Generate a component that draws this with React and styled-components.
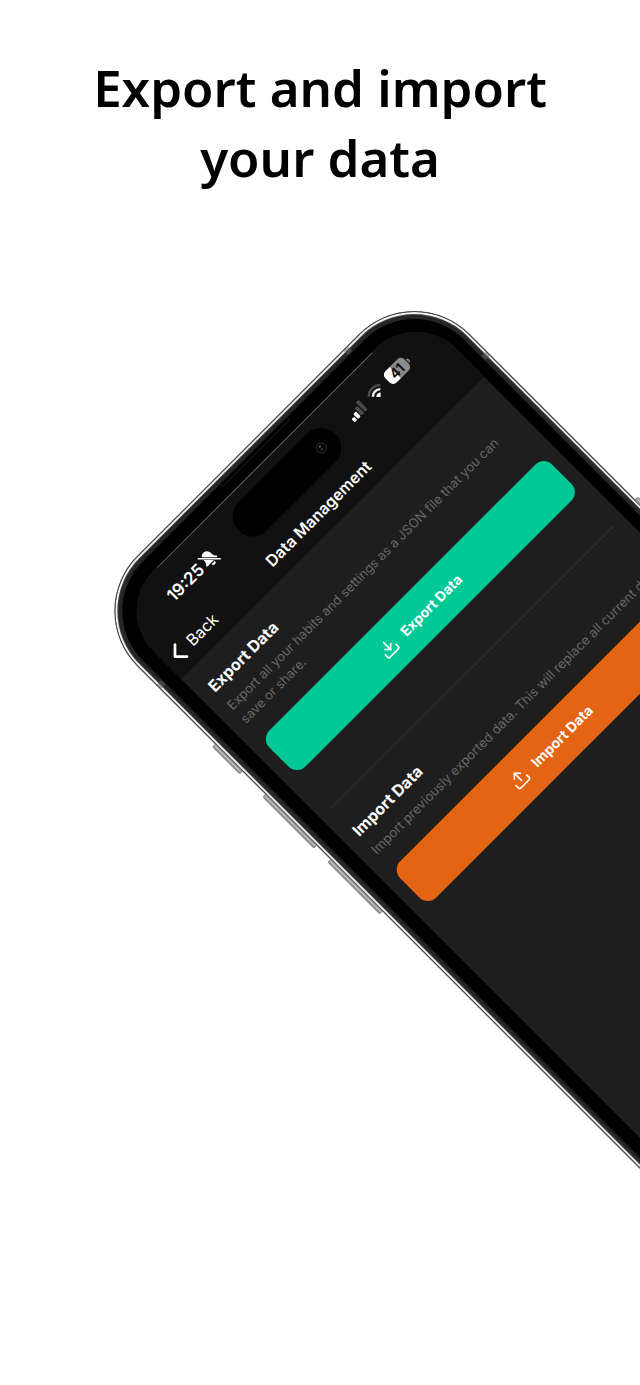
import React from 'react'
import styled, { createGlobalStyle } from 'styled-components'
import { Download, Upload } from 'lucide-react'

const colors = {
  screen: '#1e1e1e',
  header: '#111111',
  line: '#333333',
  muted: '#686868',
  green: '#00c896',
  orange: '#e36414',
  white: '#ffffff'
}

const GlobalStyle = createGlobalStyle`
  *, *::before, *::after {
    box-sizing: border-box;
  }

  body {
    background: ${colors.white};
    margin: 0;
  }
`

const Page = styled.main`
  display: flex;
  flex-direction: column;
  font-family: Inter, 'Liberation Sans', sans-serif;
  height: 100vh;
  overflow: hidden;
`

const Headline = styled.h1`
  color: #000000;
  font-family: 'Noto Sans', sans-serif;
  font-size: 51px;
  font-weight: 600;
  line-height: 70px;
  margin: 0 auto;
  max-width: 520px;
  padding-top: 52px;
  text-align: center;
`

const Stage = styled.div`
  flex: 1;
  padding-left: calc(50% - 238px);
  padding-top: 419px;
`

const Phone = styled.div`
  background: #000000;
  border: 1px solid #4a4a4a;
  border-radius: 78px;
  box-shadow: inset 0 0 0 2px #f4f4f4, inset 0 0 0 3px #444444, inset 0 0 0 7px #262626;
  height: 960px;
  padding: 21px 19px 21px 21px;
  position: relative;
  transform: rotate(-45deg);
  transform-origin: 0 0;
  width: 470px;
`

const SideKey = styled.span`
  background: linear-gradient(90deg, #777777, #c8c8c8 50%, #888888);
  border: 1px solid #777777;
  border-radius: 2px;
  height: ${props => props.$length}px;
  position: absolute;
  top: ${props => props.$top}px;
  width: 5px;
  ${props => props.$right ? 'right: -5px;' : 'left: -5px;'}
`

const Antenna = styled.span`
  background: #666666;
  height: 6px;
  opacity: 0.5;
  position: absolute;
  width: 6px;
  ${props => props.$place}
`

const Speaker = styled.span`
  border: 1px solid #1c1c1c;
  border-radius: 3px;
  height: 5px;
  left: 50%;
  position: absolute;
  top: 6px;
  transform: translateX(-50%);
  width: 96px;
`

const Screen = styled.div`
  background: ${colors.screen};
  border-radius: 57px;
  display: flex;
  flex-direction: column;
  height: 100%;
  overflow: hidden;
`

const Header = styled.header`
  background: ${colors.header};
  border-bottom: 1px solid #262626;
  position: relative;
`

const TopGlare = styled.span`
  background: #6a6a6a;
  height: 1px;
  left: 62px;
  position: absolute;
  right: 62px;
  top: 0;
`

const StatusBar = styled.div`
  align-items: center;
  color: ${colors.white};
  display: flex;
  height: 62px;
  justify-content: space-between;
  padding: 0 41px 0 49px;
`

const StatusGroup = styled.div`
  align-items: center;
  display: flex;
  gap: ${props => props.$gap}px;
`

const Time = styled.time`
  font-size: 17px;
  font-weight: 600;
  line-height: 22px;
`

const Island = styled.div`
  align-items: center;
  background: #000000;
  border-radius: 20px;
  display: flex;
  height: 40px;
  justify-content: flex-end;
  left: 50%;
  padding-right: 14px;
  position: absolute;
  top: 12px;
  transform: translateX(-50%);
  width: 137px;
`

const NavBar = styled.nav`
  align-items: center;
  display: grid;
  grid-template-columns: 1fr auto 1fr;
  height: 35px;
  padding: 0 9px 8px;
`

const BackButton = styled.button`
  align-items: center;
  background: none;
  border: 0;
  color: ${colors.white};
  display: flex;
  font: inherit;
  font-size: 16px;
  gap: 9px;
  justify-self: start;
  line-height: 22px;
  padding: 0;
`

const NavTitle = styled.h2`
  color: ${colors.white};
  font-size: 16px;
  font-weight: 600;
  line-height: 22px;
  margin: 0;
`

const Section = styled.section`
  margin: 0 14px;
  padding: ${props => props.$first ? 16 : 24}px 0 47px;

  & + & {
    border-top: 1px solid ${colors.line};
  }
`

const SectionTitle = styled.h3`
  color: ${colors.white};
  font-size: 16px;
  font-weight: 700;
  line-height: 20px;
  margin: 0 0 7px;
`

const Description = styled.p`
  color: ${colors.muted};
  font-size: 13px;
  line-height: 19px;
  margin: 0 -12px 16px 0;
`

const ActionButton = styled.button`
  align-items: center;
  background: ${props => props.$color};
  border: 0;
  border-radius: 12px;
  color: ${colors.white};
  display: flex;
  font: inherit;
  font-size: 14px;
  font-weight: 700;
  gap: 10px;
  height: 51px;
  justify-content: center;
  line-height: 20px;
  padding: 0;
  width: 100%;
`

const BellOffIcon = () => (
  <svg width='20' height='20' viewBox='0 0 18 18' aria-hidden='true'>
    <path d='M9 1.500c-3 0-4.600 2.200-4.600 5 0 3-.8 4-1.900 5.100-.5.600-.2 1.300.6 1.300h11.800c.8 0 1.100-.7.6-1.300-1.100-1.100-1.900-2.100-1.900-5.100 0-2.800-1.600-5-4.600-5z' fill='#fff' />
    <path d='M6.800 14h4.400c-.2 1.400-1 2.200-2.200 2.200S7 15.400 6.800 14z' fill='#fff' />
    <path d='M2 2l14 14' stroke={colors.header} strokeWidth='2.600' />
    <path d='M2 2l14 14' stroke='#fff' strokeWidth='1.300' strokeLinecap='round' />
  </svg>
)

const SignalIcon = () => (
  <svg width='20' height='14' viewBox='0 0 20 14' aria-hidden='true'>
    <rect x='0' y='9' width='3.800' height='4.500' rx='1.200' fill='#fff' />
    <rect x='5' y='6.500' width='3.800' height='7' rx='1.200' fill='#fff' />
    <rect x='10' y='3.500' width='3.800' height='10' rx='1.200' fill='#4a4a4a' />
    <rect x='15' y='0' width='3.800' height='13.500' rx='1.200' fill='#4a4a4a' />
  </svg>
)

const WifiIcon = () => (
  <svg width='19' height='14' viewBox='0 0 19 14' fill='none' aria-hidden='true'>
    <path d='M1.300 5.200a11.600 11.600 0 0 1 16.400 0' stroke='#4a4a4a' strokeWidth='2.500' />
    <path d='M4.200 8.100a7.500 7.500 0 0 1 10.600 0' stroke='#fff' strokeWidth='2.300' />
    <path d='M9.500 13.800L6.400 10.700a4.400 4.400 0 0 1 6.200 0z' fill='#fff' />
  </svg>
)

const BatteryBody = styled.span`
  background: linear-gradient(90deg, ${colors.white} 41%, #8a8a8a 41%);
  border-radius: 5px;
  color: ${colors.header};
  display: block;
  font-size: 14px;
  font-weight: 700;
  height: 16px;
  line-height: 16px;
  text-align: center;
  width: 27px;
`

const BatteryTip = styled.span`
  background: #8a8a8a;
  border-radius: 0 2px 2px 0;
  height: 5px;
  width: 2px;
`

const BackIcon = () => (
  <svg width='13' height='20' viewBox='0 0 13 20' fill='none' aria-hidden='true'>
    <path d='M11 1.500L2.500 10l8.500 8.500' stroke='#fff' strokeWidth='2.700' strokeLinecap='round' strokeLinejoin='round' />
  </svg>
)

const CameraIcon = () => (
  <svg width='12' height='12' viewBox='0 0 12 12' aria-hidden='true'>
    <circle cx='6' cy='6' r='5' fill='#050505' stroke='#2a2a2a' />
    <circle cx='6' cy='4' r='1' fill='#777777' />
    <circle cx='5.500' cy='7.500' r='1' fill='#2f4a48' />
  </svg>
)

const App = () => (
  <Page>
    <GlobalStyle />
    <Headline>Export and import your&nbsp;data</Headline>
    <Stage>
      <Phone>
        <SideKey $top={187} $length={39} />
        <SideKey $top={258} $length={73} />
        <SideKey $top={350} $length={74} />
        <SideKey $right $top={311} $length={110} />
        <Antenna $place='right: 94px; top: 0;' />
        <Antenna $place='right: 0; top: 101px;' />
        <Antenna $place='left: 0; top: 104px;' />
        <Speaker />
        <Screen>
          <Header>
            <TopGlare />
            <StatusBar>
              <StatusGroup $gap={1}>
                <Time>19:25</Time>
                <BellOffIcon />
              </StatusGroup>
              <StatusGroup $gap={7}>
                <SignalIcon />
                <WifiIcon />
                <StatusGroup $gap={1}>
                  <BatteryBody>41</BatteryBody>
                  <BatteryTip />
                </StatusGroup>
              </StatusGroup>
            </StatusBar>
            <Island>
              <CameraIcon />
            </Island>
            <NavBar>
              <BackButton>
                <BackIcon />
                Back
              </BackButton>
              <NavTitle>Data Management</NavTitle>
            </NavBar>
          </Header>
          <Section $first>
            <SectionTitle>Export Data</SectionTitle>
            <Description>
              Export all your habits and settings as a JSON file that you can save&nbsp;or&nbsp;share.
            </Description>
            <ActionButton $color={colors.green}>
              <Download size={20} />
              Export Data
            </ActionButton>
          </Section>
          <Section>
            <SectionTitle>Import Data</SectionTitle>
            <Description>
              Import previously exported data. This will replace all current data.
            </Description>
            <ActionButton $color={colors.orange}>
              <Upload size={20} />
              Import Data
            </ActionButton>
          </Section>
        </Screen>
      </Phone>
    </Stage>
  </Page>
)

export default App
